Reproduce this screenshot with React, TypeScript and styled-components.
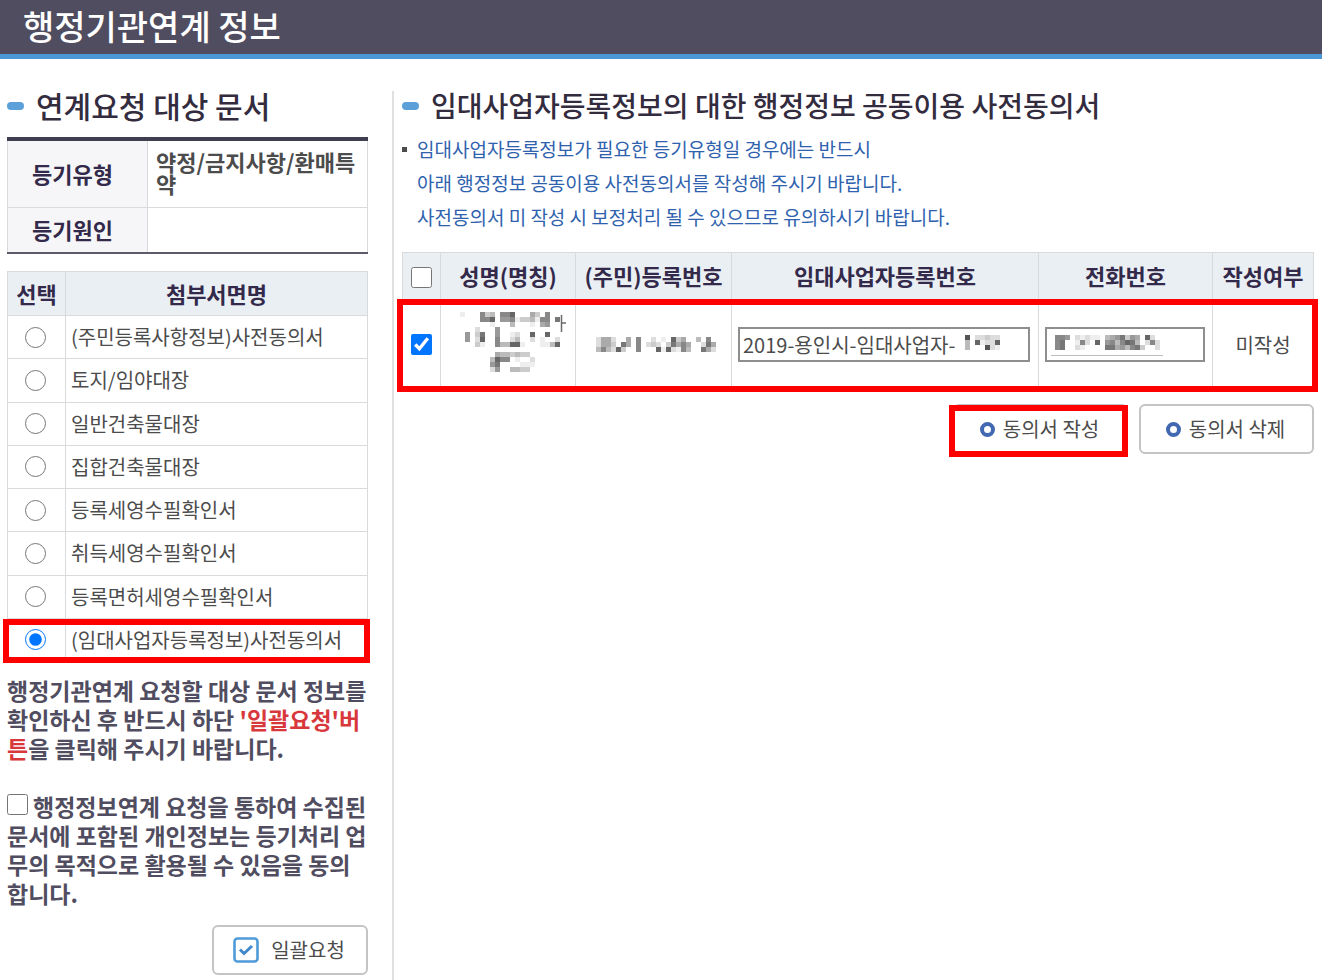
import React, { useState } from "react";
import styled, { createGlobalStyle, css } from "styled-components";

const GlobalStyle = createGlobalStyle`
  *, *::before, *::after { box-sizing: border-box; }
  body {
    margin: 0;
    background: #fff;
    color: #4c4c4c;
    font-family: "Noto Sans CJK KR", "Noto Sans", sans-serif;
    font-size: 20px;
  }
  h1, h2, p, ul { margin: 0; padding: 0; }
`;

const redFrame = css`
  content: "";
  position: absolute;
  border: 6px solid #ff0000;
  pointer-events: none;
`;

const Page = styled.div`
  display: flex;
  flex-direction: column;
  min-height: 100vh;
`;

const TitleBar = styled.header`
  padding: 0 23px 2px;
  background: #4f4d5f;
  border-bottom: 5px solid #4c98d6;
`;

const Title = styled.h1`
  color: #fff;
  font-size: 34px;
  font-weight: 500;
  line-height: 52px;
`;

const Columns = styled.div`
  display: flex;
  flex: 1;
  padding-top: 32px;
`;

const DocumentPanel = styled.aside`
  flex: none;
  width: 394px;
  padding: 0 24px 5px 7px;
  border-right: 2px solid #e0e0e2;
`;

const ConsentPanel = styled.main`
  flex: 1;
  min-width: 0;
  padding: 0 8px;
`;

const Heading = styled.h2<{ $size: number }>`
  display: flex;
  align-items: center;
  gap: 12px;
  height: 30px;
  color: #332c3e;
  font-size: ${(p) => p.$size}px;
  font-weight: 500;
  line-height: 28px;
  white-space: nowrap;

  &::before {
    content: "";
    width: 17px;
    height: 8px;
    border-radius: 4px;
    background: #5ba0d8;
  }
`;

const HeadingText = styled.span`
  padding-bottom: 2px;
`;

const BaseTable = styled.table`
  width: 100%;
  border-collapse: collapse;
  table-layout: fixed;

  th,
  td {
    padding: 0;
    border: 1px solid #d9dadc;
  }
  th {
    padding-bottom: 2px;
    color: #33294a;
    font-size: 22px;
    font-weight: 700;
    line-height: 22px;
  }
`;

const SummaryTable = styled(BaseTable)`
  margin-top: 16px;
  border-top: 4px solid #3f3e50;
  border-bottom: 2px solid #5b5a6a;

  th {
    width: 140px;
    padding-right: 10px;
    background: #f6f6f8;
  }
  td {
    padding: 0 0 4px 8px;
    font-size: 22px;
    font-weight: 700;
    line-height: 22px;
    word-break: break-all;
  }
`;

const SummaryRow = styled.tr<{ $tall?: boolean }>`
  height: ${(p) => (p.$tall ? 68 : 46)}px;
`;

const DocumentTable = styled(BaseTable)`
  height: 391px;
  margin-top: 17px;

  thead th {
    height: 44px;
    background: #eaeff3;
  }
  thead th:first-child {
    width: 58px;
  }
`;

const DocumentRow = styled.tr<{ $marked: boolean }>`
  position: relative;

  td:first-child {
    padding-right: 2px;
  }
  td:last-child {
    padding-left: 5px;
  }
  ${(p) =>
    p.$marked &&
    css`
      td:last-child::after {
        ${redFrame}
        inset: 1px -2px -1px -5px;
      }
    `}
`;

const Radio = styled.input.attrs({ type: "radio" })`
  display: block;
  width: 21px;
  height: 21px;
  margin: 0 auto;
`;

const Checkbox = styled.input.attrs({ type: "checkbox" })`
  width: 21px;
  height: 21px;
  margin: 0;
`;

const CellCheckbox = styled(Checkbox)`
  display: block;
  margin: 0 auto;
`;

const RowLabel = styled.label`
  display: block;
  line-height: 24px;
  white-space: nowrap;
`;

const Guide = styled.p`
  margin-top: 14px;
  color: #514d60;
  font-size: 23px;
  font-weight: 700;
  line-height: 29px;
  white-space: nowrap;
`;

const Emphasis = styled.em`
  color: #d8383c;
  font-style: normal;
`;

const Agreement = styled.div`
  margin-top: 29px;
  color: #514d60;
  font-size: 23px;
  font-weight: 700;
  line-height: 29px;
  white-space: nowrap;

  input {
    margin: 2px 5px 0 0;
    vertical-align: top;
  }
`;

const Actions = styled.div<{ $top: number }>`
  display: flex;
  justify-content: flex-end;
  gap: 11px;
  margin-top: ${(p) => p.$top}px;
`;

const Button = styled.button<{ $width: number; $gap: number; $marked?: boolean }>`
  position: relative;
  display: flex;
  align-items: center;
  justify-content: center;
  gap: ${(p) => p.$gap}px;
  width: ${(p) => p.$width}px;
  height: 50px;
  padding: 0 2px 0 0;
  border: 2px solid #c4c4c4;
  border-radius: 6px;
  background: #fff;
  color: #4c4c4c;
  font-family: inherit;
  font-size: 20px;
  line-height: 24px;
  white-space: nowrap;
  cursor: pointer;

  ${(p) =>
    p.$marked &&
    css`
      &::after {
        ${redFrame}
        inset: -1px -2px -5px -6px;
      }
    `}
`;

const Ring = styled.span`
  width: 15px;
  height: 15px;
  border: 4px solid #4168b0;
  border-radius: 50%;
`;

const Notice = styled.ul`
  margin-top: 11px;
  list-style: none;
`;

const NoticeItem = styled.li`
  display: flex;
  gap: 10px;
  color: #2f62ae;
  font-size: 19px;
  line-height: 34px;

  &::before {
    content: "";
    flex: none;
    width: 5px;
    height: 5px;
    margin-top: 15px;
    background: #4c4c4c;
  }
`;

const ConsentTable = styled(BaseTable)`
  margin-top: 18px;

  thead tr {
    height: 47px;
  }
  thead th {
    background: #eaeff3;
    white-space: nowrap;
  }
  thead th:first-child {
    padding-top: 4px;
  }
  td {
    padding-bottom: 2px;
    text-align: center;
  }
`;

const ColumnSize = styled.col<{ $width?: number }>`
  width: ${(p) => (p.$width ? `${p.$width}px` : "auto")};
`;

const ConsentRow = styled.tr`
  position: relative;
  height: 91px;

  td:last-child::after {
    ${redFrame}
    inset: -1px -4px -1px -6px;
  }
`;

const FieldCell = styled.div<{ $right: number }>`
  position: relative;
  margin: 0 ${(p) => p.$right}px 0 6px;
`;

const Field = styled.input`
  display: block;
  width: 100%;
  height: 35px;
  padding: 0 3px;
  border: 2px solid #8e8e8e;
  border-radius: 0;
  background: #fff;
  color: #4c4c4c;
  font-family: inherit;
  font-size: 20px;
`;

const FieldCover = styled.div<{ $left: number }>`
  position: absolute;
  top: 8px;
  left: ${(p) => p.$left}px;
  display: flex;
  pointer-events: none;
`;

const Drawing = styled.svg`
  display: block;
  flex: none;
`;

const CenteredDrawing = styled(Drawing)`
  margin: 0 auto;
`;

const CELL = 5;

// Every character is one square: a hex grey level, or "." for an empty one.
function mosaicCells(rows: string[]) {
  return rows.flatMap((row, y) =>
    [...row].map((level, x) =>
      level === "." ? null : (
        <rect
          key={`${x}-${y}`}
          x={x * CELL}
          y={y * CELL}
          width={CELL}
          height={CELL}
          fill={`#${level.repeat(3)}`}
        />
      )
    )
  );
}

const NAME_MASK = [
  "e...8cb.886...ac.8..",
  "....886.998eccbe88.7",
  "......e...b...e.a9..",
  "...d...9............",
  ".9.c7..9..ed..6..6..",
  ".9.d6..8..db..d.e..d",
  "f..ce..8bb66ef..eeb6",
  "",
  ".......abbcbcc......",
  "......b688.e..d.....",
  "......97....eee.....",
  "......d9..bbcc......",
];

const NUMBER_MASK = [
  "fdaad..a.8..dfe.6ca..b.8f",
  "fdaac.7a.8.dcdfc7a8a.fd7a",
  "fb8bd6c..8..f6e6de8b..7ad",
];

const LICENSE_MASK = ["5.ddcdd", "b.6edd6", "b...5de"];

const PHONE_MASK = [
  "889.dedee.ba97c9a.6df",
  "87..e8df6.98b867b.d8d",
  "87..deff..77a9b87c..d",
];

const DOCUMENTS = [
  "(주민등록사항정보)사전동의서",
  "토지/임야대장",
  "일반건축물대장",
  "집합건축물대장",
  "등록세영수필확인서",
  "취득세영수필확인서",
  "등록면허세영수필확인서",
  "(임대사업자등록정보)사전동의서",
];

const RENTAL_CONSENT = DOCUMENTS.length - 1;

function CheckIcon() {
  return (
    <Drawing width="26" height="26" viewBox="0 0 26 26" fill="none" aria-hidden="true">
      <rect x="1.5" y="1.5" width="23" height="23" rx="3" stroke="#4f9ad8" strokeWidth="2.6" />
      <path d="M7 12.5 L11 16.5 L19 9" stroke="#4189cc" strokeWidth="3" />
    </Drawing>
  );
}

function DocumentSection() {
  const [selected, setSelected] = useState(RENTAL_CONSENT);

  return (
    <DocumentPanel>
      <Heading $size={30}>
        <HeadingText>연계요청 대상 문서</HeadingText>
      </Heading>
      <SummaryTable>
        <tbody>
          <SummaryRow $tall>
            <th scope="row">등기유형</th>
            <td>약정/금지사항/환매특약</td>
          </SummaryRow>
          <SummaryRow>
            <th scope="row">등기원인</th>
            <td />
          </SummaryRow>
        </tbody>
      </SummaryTable>
      <DocumentTable>
        <thead>
          <tr>
            <th scope="col">선택</th>
            <th scope="col">첨부서면명</th>
          </tr>
        </thead>
        <tbody>
          {DOCUMENTS.map((name, i) => (
            <DocumentRow key={name} $marked={i === RENTAL_CONSENT}>
              <td>
                <Radio
                  id={`document-${i}`}
                  name="document"
                  checked={selected === i}
                  onChange={() => setSelected(i)}
                />
              </td>
              <td>
                <RowLabel htmlFor={`document-${i}`}>{name}</RowLabel>
              </td>
            </DocumentRow>
          ))}
        </tbody>
      </DocumentTable>
      <Guide>
        행정기관연계 요청할 대상 문서 정보를
        <br />
        확인하신 후 반드시 하단 <Emphasis>'일괄요청'버</Emphasis>
        <br />
        <Emphasis>튼</Emphasis>을 클릭해 주시기 바랍니다.
      </Guide>
      <Agreement>
        <Checkbox id="agreement" />
        <label htmlFor="agreement">
          행정정보연계 요청을 통하여 수집된
          <br />
          문서에 포함된 개인정보는 등기처리 업
          <br />
          무의 목적으로 활용될 수 있음을 동의
          <br />
          합니다.
        </label>
      </Agreement>
      <Actions $top={17}>
        <Button type="button" $width={156} $gap={12}>
          <CheckIcon />
          일괄요청
        </Button>
      </Actions>
    </DocumentPanel>
  );
}

function ConsentSection() {
  return (
    <ConsentPanel>
      <Heading $size={28}>
        <HeadingText>임대사업자등록정보의 대한 행정정보 공동이용 사전동의서</HeadingText>
      </Heading>
      <Notice>
        <NoticeItem>
          <span>
            임대사업자등록정보가 필요한 등기유형일 경우에는 반드시
            <br />
            아래 행정정보 공동이용 사전동의서를 작성해 주시기 바랍니다.
            <br />
            사전동의서 미 작성 시 보정처리 될 수 있으므로 유의하시기 바랍니다.
          </span>
        </NoticeItem>
      </Notice>
      <ConsentTable>
        <colgroup>
          <ColumnSize $width={38} />
          <ColumnSize $width={135} />
          <ColumnSize $width={156} />
          <ColumnSize />
          <ColumnSize $width={174} />
          <ColumnSize $width={101} />
        </colgroup>
        <thead>
          <tr>
            <th scope="col">
              <CellCheckbox aria-label="전체 선택" />
            </th>
            <th scope="col">성명(명칭)</th>
            <th scope="col">(주민)등록번호</th>
            <th scope="col">임대사업자등록번호</th>
            <th scope="col">전화번호</th>
            <th scope="col">작성여부</th>
          </tr>
        </thead>
        <tbody>
          <ConsentRow>
            <td>
              <CellCheckbox defaultChecked aria-label="선택" />
            </td>
            <td>
              <CenteredDrawing width="96" height="64" viewBox="0 0 96 64" overflow="visible" aria-hidden="true">
                {mosaicCells(NAME_MASK)}
                <path d="M101.5 3 V20 M102 11 H106" stroke="#6a6a6a" strokeWidth="1.5" />
              </CenteredDrawing>
            </td>
            <td>
              <CenteredDrawing width="125" height="15" viewBox="0 0 125 15" aria-hidden="true">
                {mosaicCells(NUMBER_MASK)}
              </CenteredDrawing>
            </td>
            <td>
              <FieldCell $right={8}>
                <Field type="text" defaultValue="2019-용인시-임대사업자-" aria-label="임대사업자등록번호" />
                <FieldCover $left={227}>
                  <Drawing width="35" height="15" viewBox="0 0 35 15" aria-hidden="true">
                    {mosaicCells(LICENSE_MASK)}
                  </Drawing>
                </FieldCover>
              </FieldCell>
            </td>
            <td>
              <FieldCell $right={7}>
                <Field type="tel" aria-label="전화번호" />
                <FieldCover $left={6}>
                  <Drawing width="112" height="21" viewBox="-4 0 112 21" aria-hidden="true">
                    {mosaicCells(PHONE_MASK)}
                    <path d="M-4 20.5 H108" stroke="#bdbdbd" />
                  </Drawing>
                </FieldCover>
              </FieldCell>
            </td>
            <td>미작성</td>
          </ConsentRow>
        </tbody>
      </ConsentTable>
      <Actions $top={13}>
        <Button type="button" $width={175} $gap={8} $marked>
          <Ring />
          동의서 작성
        </Button>
        <Button type="button" $width={175} $gap={8}>
          <Ring />
          동의서 삭제
        </Button>
      </Actions>
    </ConsentPanel>
  );
}

export default function App() {
  return (
    <>
      <GlobalStyle />
      <Page>
        <TitleBar>
          <Title>행정기관연계 정보</Title>
        </TitleBar>
        <Columns>
          <DocumentSection />
          <ConsentSection />
        </Columns>
      </Page>
    </>
  );
}
